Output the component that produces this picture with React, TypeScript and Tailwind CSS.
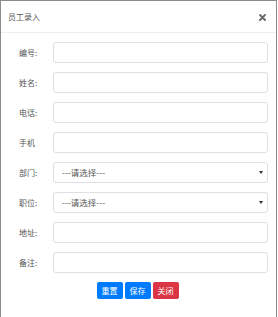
import React from "react";

const fields: { label: string; type: "input" | "select" }[] = [
  { label: "编号:", type: "input" },
  { label: "姓名:", type: "input" },
  { label: "电话:", type: "input" },
  { label: "手机", type: "input" },
  { label: "部门:", type: "select" },
  { label: "职位:", type: "select" },
  { label: "地址:", type: "input" },
  { label: "备注:", type: "input" },
];

export default function App() {
  return (
    <div
      className="w-[278px] h-[317px] bg-white overflow-hidden"
      style={{ fontFamily: '"Noto Sans CJK SC", "Noto Sans", sans-serif' }}
    >
      <div className="w-[277px] h-[317px] border-t border-l border-r border-[#8c8c8c] flex flex-col">
        {/* Header */}
        <div className="h-[32px] flex items-center justify-between pl-[7px] pr-[10px] border-b border-[#eeeeee]">
          <span className="text-[8px] text-[#555]">员工录入</span>
          <svg width="7" height="7" viewBox="0 0 7 7" className="mt-[1px]">
            <path d="M1 1 L6 6 M6 1 L1 6" stroke="#666" strokeWidth="1.8" strokeLinecap="round" />
          </svg>
        </div>

        {/* Form */}
        <div className="flex flex-col gap-[9px] pt-[9px] pr-[8px]">
          {fields.map((f, i) => (
            <div key={i} className="flex items-center h-[21px]">
              <div className="w-[52px] pl-[18px] text-[8px] text-[#555]">{f.label}</div>
              {f.type === "input" ? (
                <div className="flex-1 h-[21px] border border-[#dcdfe3] rounded-[3px] bg-white" />
              ) : (
                <div className="flex-1 h-[21px] border border-[#dcdfe3] rounded-[3px] bg-white flex items-center justify-between pl-[8px] pr-[4px]">
                  <span className="text-[8.5px] text-[#555]">---请选择---</span>
                  <svg width="4" height="3" viewBox="0 0 4 3">
                    <path d="M0 0 H4 L2 3 Z" fill="#333" />
                  </svg>
                </div>
              )}
            </div>
          ))}
        </div>

        {/* Buttons */}
        <div className="flex justify-center gap-[2px] mt-[9px] pr-[2px]">
          <button className="w-[26px] h-[17px] rounded-[2px] bg-[#007bff] text-white text-[8px] leading-none">
            重置
          </button>
          <button className="w-[26px] h-[17px] rounded-[2px] bg-[#007bff] text-white text-[8px] leading-none">
            保存
          </button>
          <button className="w-[26px] h-[17px] rounded-[2px] bg-[#dc3545] text-white text-[8px] leading-none">
            关闭
          </button>
        </div>
      </div>
    </div>
  );
}
